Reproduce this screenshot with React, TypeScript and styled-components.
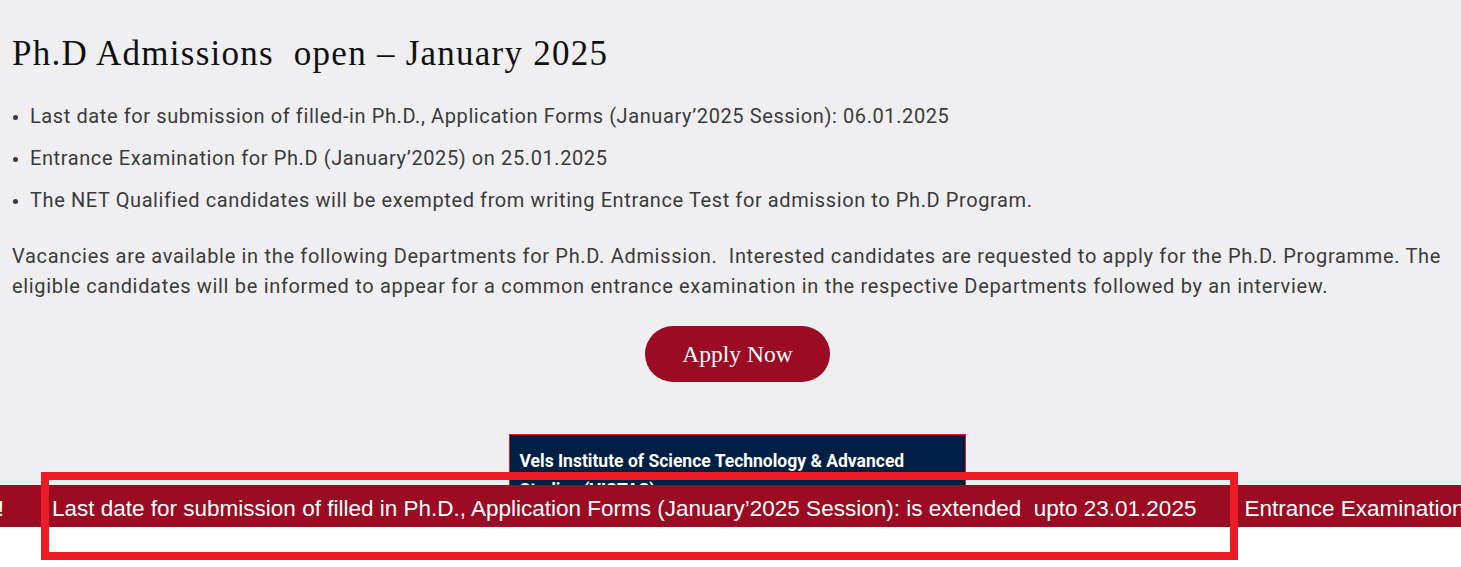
import styled, { createGlobalStyle } from "styled-components";

const GlobalStyle = createGlobalStyle`
    html, body {
        margin: 0;
        padding: 0;
        background: #ffffff;
    }
    * {
        box-sizing: border-box;
    }
`;

const StyledPage = styled.div`
    width: 1461px;
    height: 567px;
    position: relative;
    overflow: hidden;
    background: #ffffff;
`;

const StyledContent = styled.div`
    height: 485px;
    overflow: hidden;
    background: #efeff1;
    padding: 31px 12px 0px 12px;
`;

const StyledTitle = styled.h1`
    margin: 0px 0px 18px 0px;
    font-family: "Liberation Serif", serif;
    font-weight: normal;
    font-size: 35px;
    letter-spacing: 1.25px;
    line-height: 46px;
    color: #111111;
`;

const StyledList = styled.ul`
    list-style: none;
    margin: 0px;
    padding: 0px;
`;

const StyledListItem = styled.li`
    position: relative;
    padding-left: 18px;
    height: 42px;
    line-height: 42px;
    font-family: "Roboto", sans-serif;
    font-size: 20px;
    letter-spacing: 0.6px;
    color: #3a3a3a;

    &::before {
        content: "";
        position: absolute;
        left: 1px;
        top: 20px;
        width: 5px;
        height: 5px;
        border-radius: 50%;
        background: #3a3a3a;
    }
`;

const StyledParagraph = styled.p`
    margin: 20px -6px 0px 0px;
    font-family: "Roboto", sans-serif;
    font-size: 20px;
    letter-spacing: 0.68px;
    line-height: 30px;
    color: #3a3a3a;
`;

const StyledButtonRow = styled.div`
    display: flex;
    justify-content: center;
    margin-top: 25px;
    padding-left: 14px;
`;

const StyledApplyButton = styled.button`
    width: 185px;
    height: 56px;
    border: none;
    border-radius: 28px;
    background: #9b0c24;
    color: #ffffff;
    font-family: "Liberation Serif", serif;
    font-size: 23.5px;
    cursor: pointer;
`;

const StyledCardRow = styled.div`
    display: flex;
    justify-content: center;
    margin-top: 52px;
    padding-left: 13px;
`;

const StyledCard = styled.div`
    width: 457px;
    height: 200px;
    background: #001f45;
    border: 1px solid #ed1c24;
    padding: 12px 10px;
    font-family: "Roboto", sans-serif;
    font-weight: bold;
    font-size: 17.5px;
    line-height: 29px;
    color: #ffffff;
`;

const StyledTicker = styled.div`
    height: 42px;
    padding-top: 5px;
    background: #9b0c23;
    overflow: hidden;
    white-space: nowrap;
    display: flex;
    align-items: center;
`;

const StyledTickerTrack = styled.div`
    display: flex;
    gap: 48px;
    padding-left: 4px;
    font-family: "Liberation Sans", Arial, sans-serif;
    font-size: 22.5px;
    color: #ffffff;
`;

const StyledTickerLead = styled.div`
    width: 0px;
    display: flex;
    justify-content: flex-end;
`;

const StyledHighlight = styled.div`
    position: absolute;
    left: 41px;
    top: 472px;
    width: 1197px;
    height: 88px;
    border: 8px solid #ed1c24;
    pointer-events: none;
`;

const bullets = [
    "Last date for submission of filled-in Ph.D., Application Forms (January\u20192025 Session): 06.01.2025",
    "Entrance Examination for Ph.D (January\u20192025) on 25.01.2025",
    "The NET Qualified candidates will be exempted from writing Entrance Test for admission to Ph.D Program.",
];

const leadItem = "The NET Qualified candidates will be exempted from writing Entrance Test for admission to Ph.D Program!";

const tickerItems = [
    "Last date for submission of filled in Ph.D., Application Forms (January\u20192025 Session): is extended\u00a0 upto 23.01.2025",
    "Entrance Examination for Ph.D (January\u20192025) on 25.01.2025",
];

export default function App() {
    return (
        <>
            <GlobalStyle />
            <StyledPage>
                <StyledContent>
                    <StyledTitle>Ph.D Admissions&nbsp; open – January 2025</StyledTitle>
                    <StyledList>
                        {bullets.map(item => (
                            <StyledListItem key={item}>{item}</StyledListItem>
                        ))}
                    </StyledList>
                    <StyledParagraph>
                        Vacancies are available in the following Departments for Ph.D. Admission.&nbsp; Interested candidates are requested to apply for the Ph.D. Programme. The eligible candidates will be informed to appear for a common entrance examination in the respective Departments followed by an interview.
                    </StyledParagraph>
                    <StyledButtonRow>
                        <StyledApplyButton>Apply Now</StyledApplyButton>
                    </StyledButtonRow>
                    <StyledCardRow>
                        <StyledCard>
                            Vels Institute of Science Technology &amp; Advanced Studies (VISTAS)
                        </StyledCard>
                    </StyledCardRow>
                </StyledContent>
                <StyledTicker>
                    <StyledTickerTrack>
                        <StyledTickerLead>
                            <span>{leadItem}</span>
                        </StyledTickerLead>
                        {tickerItems.map(item => (
                            <span key={item}>{item}</span>
                        ))}
                    </StyledTickerTrack>
                </StyledTicker>
                <StyledHighlight />
            </StyledPage>
        </>
    );
}
